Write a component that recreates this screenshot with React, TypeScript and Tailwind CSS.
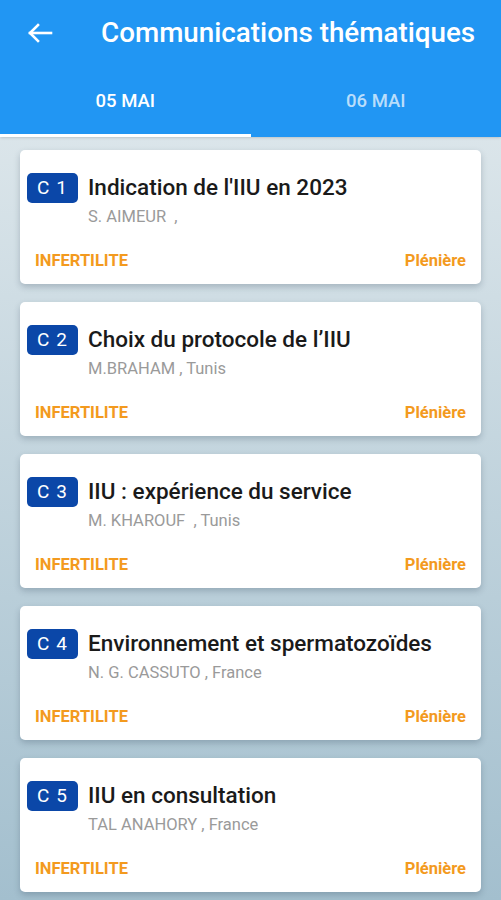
import React from "react";

const items = [
  { code: "C 1", title: "Indication de l'IIU en 2023", author: "S. AIMEUR  ," },
  { code: "C 2", title: "Choix du protocole de l\u2019IIU", author: "M.BRAHAM , Tunis" },
  { code: "C 3", title: "IIU : expérience du service", author: "M. KHAROUF  , Tunis" },
  { code: "C 4", title: "Environnement et spermatozoïdes", author: "N. G. CASSUTO , France" },
  { code: "C 5", title: "IIU en consultation", author: "TAL ANAHORY , France" },
];

const BackArrow = () => (
  <svg width="26" height="22" viewBox="0 0 26 22" fill="none" stroke="white" strokeWidth="2.6" strokeLinecap="square">
    <path d="M3 11H24" />
    <path d="M11 3L3 11L11 19" />
  </svg>
);

const App = () => {
  return (
    <div
      className="w-[501px] h-[900px] overflow-hidden flex flex-col bg-gradient-to-b from-[#e5ecef] to-[#a3bfce]"
      style={{ fontFamily: "Roboto, 'Liberation Sans', sans-serif" }}
    >
      <div className="bg-[#2196f3] h-[137px] flex flex-col shadow-sm">
        <div className="h-[66px] flex items-center">
          <div className="pl-[27px] w-[101px]">
            <BackArrow />
          </div>
          <h1 className="text-white text-[27.8px] font-medium">Communications thématiques</h1>
        </div>
        <div className="flex flex-1">
          <div className="flex-1 flex flex-col">
            <div className="flex-1 flex items-center justify-center pt-[4px] text-white text-[18.5px] font-medium">05 MAI</div>
            <div className="h-[3px] bg-white" />
          </div>
          <div className="flex-1 flex flex-col">
            <div className="flex-1 flex items-center justify-center pt-[4px] text-white/70 text-[18.5px] font-medium">06 MAI</div>
            <div className="h-[3px]" />
          </div>
        </div>
      </div>

      <div className="flex flex-col gap-[18px] px-[20px] pt-[13px]">
        {items.map((item) => (
          <div key={item.code} className="bg-white rounded-[5px] shadow-[0_3px_6px_rgba(40,60,80,0.25)] h-[134px] flex flex-col">
            <div className="flex gap-[10px] pl-[7px] pt-[23px]">
              <div className="w-[51px] h-[30px] rounded-[5px] bg-[#0b47a8] text-white text-[19px] flex items-center justify-center tracking-[1px]">
                {item.code}
              </div>
              <div className="flex flex-col">
                <div className="text-[22.5px] font-medium text-[#1a1a1a] leading-[28px]">{item.title}</div>
                <div className="text-[16.5px] text-[#9a9a9a] leading-[20px] mt-[6px] whitespace-pre">{item.author}</div>
              </div>
            </div>
            <div className="flex justify-between px-[15px] mt-auto mb-[10px] text-[16.5px] font-bold text-[#f39a1e]">
              <span>INFERTILITE</span>
              <span>Plénière</span>
            </div>
          </div>
        ))}
      </div>
    </div>
  );
};

export default App;
